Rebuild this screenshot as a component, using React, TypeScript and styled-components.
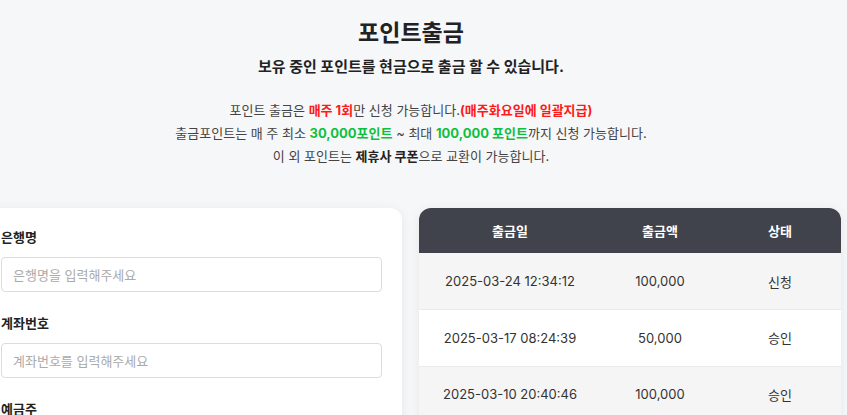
import React from "react";
import styled, { createGlobalStyle } from "styled-components";

const Global = createGlobalStyle`
  html, body { margin: 0; padding: 0; background: #f6f7f9; }
  body { font-family: Inter, "Noto Sans CJK KR", sans-serif; color: #333; overflow: hidden; }
  * { box-sizing: border-box; }
`;

const Page = styled.div`
  width: 860px;
  margin-left: -19px;
  padding-top: 16px;
`;

const Title = styled.h1`
  margin: 0;
  text-align: center;
  font-size: 23px;
  line-height: 34px;
  font-weight: 700;
  color: #222;
`;

const Subtitle = styled.p`
  margin: 0;
  margin-top: 6px;
  text-align: center;
  font-size: 15px;
  line-height: 22px;
  font-weight: 700;
  color: #222;
`;

const Info = styled.div`
  margin-top: 21px;
  text-align: center;
  font-size: 13px;
  line-height: 23px;
  color: #444;
`;

const Mark = styled.b<{ $tone: "red" | "green" | "dark" }>`
  font-weight: 700;
  color: ${(p) => (p.$tone === "red" ? "#ff1a1a" : p.$tone === "green" ? "#0fbf3e" : "#222")};
`;

const Columns = styled.div`
  margin-top: 40px;
  display: grid;
  grid-template-columns: 421px 422px;
  gap: 17px;
  align-items: start;
`;

const FormCard = styled.div`
  background: #fff;
  border-radius: 12px;
  box-shadow: 0 2px 12px rgba(0, 0, 0, 0.07);
  padding: 19px 20px 20px 20px;
  min-height: 260px;
`;

const Field = styled.div`
  & + & { margin-top: 21px; }
`;

const Label = styled.label`
  display: block;
  font-size: 13px;
  line-height: 20px;
  font-weight: 700;
  color: #222;
  margin-bottom: 10px;
`;

const Input = styled.input`
  display: block;
  width: 100%;
  height: 35px;
  border: 1px solid #dcdcdc;
  border-radius: 4px;
  padding: 0 11px;
  font-family: Inter, "Noto Sans CJK KR", sans-serif;
  font-size: 13px;
  color: #333;
  background: #fff;
  outline: none;
  &::placeholder { color: #aaa; }
`;

const TableCard = styled.div`
  background: #fff;
  border-radius: 12px;
  overflow: hidden;
  box-shadow: 0 2px 12px rgba(0, 0, 0, 0.07);
`;

const Table = styled.table`
  width: 100%;
  border-collapse: collapse;
  table-layout: fixed;
`;

const Th = styled.th<{ $w: number }>`
  width: ${(p) => p.$w}px;
  height: 45px;
  background: #40434c;
  color: #fff;
  font-size: 13px;
  font-weight: 700;
  text-align: center;
  padding: 0;
`;

const Row = styled.tr<{ $alt: boolean }>`
  background: ${(p) => (p.$alt ? "#f5f5f5" : "#fff")};
  border-bottom: 1px solid #ebebeb;
`;

const Td = styled.td`
  height: 56.5px;
  text-align: center;
  font-size: 13px;
  color: #333;
  padding: 0;
`;

const rows = [
  { date: "2025-03-24 12:34:12", amount: "100,000", status: "신청" },
  { date: "2025-03-17 08:24:39", amount: "50,000", status: "승인" },
  { date: "2025-03-10 20:40:46", amount: "100,000", status: "승인" },
];

export default function App() {
  return (
    <>
      <Global />
      <Page>
        <Title>포인트출금</Title>
        <Subtitle>보유 중인 포인트를 현금으로 출금 할 수 있습니다.</Subtitle>
        <Info>
          포인트 출금은 <Mark $tone="red">매주 1회</Mark>만 신청 가능합니다.
          <Mark $tone="red">(매주화요일에 일괄지급)</Mark>
          <br />
          출금포인트는 매 주 최소 <Mark $tone="green">30,000포인트</Mark> ~ 최대{" "}
          <Mark $tone="green">100,000 포인트</Mark>까지 신청 가능합니다.
          <br />
          이 외 포인트는 <Mark $tone="dark">제휴사 쿠폰</Mark>으로 교환이 가능합니다.
        </Info>
        <Columns>
          <FormCard>
            <Field>
              <Label>은행명</Label>
              <Input placeholder="은행명을 입력해주세요" />
            </Field>
            <Field>
              <Label>계좌번호</Label>
              <Input placeholder="계좌번호를 입력해주세요" />
            </Field>
            <Field>
              <Label>예금주</Label>
              <Input placeholder="예금주를 입력해주세요" />
            </Field>
          </FormCard>
          <TableCard>
            <Table>
              <thead>
                <tr>
                  <Th $w={182}>출금일</Th>
                  <Th $w={118}>출금액</Th>
                  <Th $w={122}>상태</Th>
                </tr>
              </thead>
              <tbody>
                {rows.map((r, i) => (
                  <Row key={r.date} $alt={i % 2 === 0}>
                    <Td>{r.date}</Td>
                    <Td>{r.amount}</Td>
                    <Td>{r.status}</Td>
                  </Row>
                ))}
              </tbody>
            </Table>
          </TableCard>
        </Columns>
      </Page>
    </>
  );
}
